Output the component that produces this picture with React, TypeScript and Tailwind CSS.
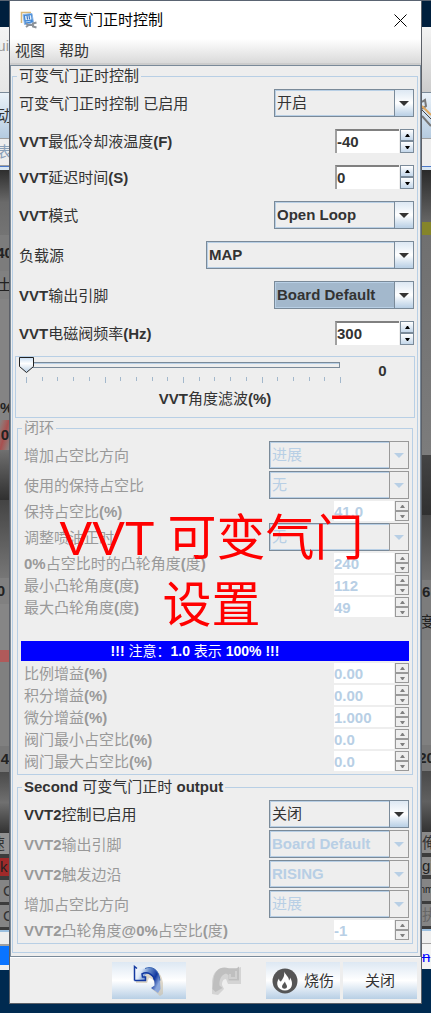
import React from 'react';

const SANS = "font-['Liberation_Sans','Noto_Sans_CJK_SC',sans-serif]";

// Latin runs are bold in this look and feel, Chinese glyphs stay regular
const Mixed: React.FC<{ text: string }> = ({ text }) => (
  <>
    {text.split(/([\x20-\x7e]+)/).map((part, i) =>
      i % 2 ? (
        <span key={i} className="font-bold">{part}</span>
      ) : (
        part
      )
    )}
  </>
);

interface RowProps {
  id: string;
  label: string;
  value: string;
  disabled?: boolean;
}

interface ComboProps extends RowProps {
  wide?: boolean;
  active?: boolean;
}

const Row: React.FC<{ id: string; label: string; disabled?: boolean; children: React.ReactNode }> = ({
  id,
  label,
  disabled,
  children,
}) => (
  <div className="flex items-center justify-between pl-[3px]">
    <label
      htmlFor={id}
      className={`whitespace-pre pt-[2px] leading-[18px] ${disabled ? 'text-[#999999]' : 'text-[#333333]'}`}
    >
      <Mixed text={label} />
    </label>
    {children}
  </div>
);

const Combo: React.FC<ComboProps> = ({ id, label, value, disabled, wide, active }) => (
  <Row id={id} label={label} disabled={disabled}>
    <div className={`relative h-7 border border-[#7a8a99] ${wide ? 'w-52' : 'w-[140px]'}`}>
      <select
        id={id}
        disabled={disabled}
        className={`block h-full w-full appearance-none border border-[#b8cfe5] pl-px pr-5 leading-5 opacity-100 outline-none
                    ${/[a-z]/i.test(value) ? 'font-bold' : 'font-normal'}
                    ${active ? 'bg-[#a3b8cc]' : 'bg-[#eeeeee]'}
                    ${disabled ? 'text-[#b8cfe5]' : 'text-[#333333]'}`}
      >
        <option>{value}</option>
      </select>
      <span
        className={`pointer-events-none absolute -inset-y-px -right-px flex w-5 items-center justify-center border
                    ${disabled
                      ? 'border-[#999999] bg-[#eeeeee] text-[#b8cfe5]'
                      : 'border-[#7a8a99] bg-linear-to-b from-[#dde8f3] via-white to-[#b8cfe5] text-[#333333]'}`}
      >
        <svg width="10" height="5" viewBox="0 0 10 5" fill="currentColor">
          <path d="M0 0h10L5 5z" />
        </svg>
      </span>
    </div>
  </Row>
);

const Stepper: React.FC<{ name: string; up?: boolean; disabled?: boolean }> = ({ name, up, disabled }) => (
  <button
    type="button"
    aria-label={name}
    disabled={disabled}
    className={`flex w-[14px] flex-1 items-center justify-center border
                ${disabled
                  ? 'border-[#999999] bg-[#eeeeee] text-[#808080]'
                  : 'border-[#7a8a99] bg-linear-to-b from-white to-[#c4d7ea] text-black'}`}
  >
    <svg width="5" height="3" viewBox="0 0 5 3" fill="currentColor">
      <path d={up ? 'M0 3h5L3 0H2z' : 'M0 0h5L3 3H2z'} />
    </svg>
  </button>
);

const Spinner: React.FC<RowProps> = ({ id, label, value, disabled }) => (
  <Row id={id} label={label} disabled={disabled}>
    <div className={`flex gap-px ${disabled ? 'h-5' : 'h-6'}`}>
      <input
        id={id}
        type="text"
        defaultValue={value}
        disabled={disabled}
        className={`bg-white font-bold outline-none
                    ${disabled
                      ? 'w-[60px] pt-px text-[#b8cfe5]'
                      : 'w-16 border-l-2 border-t-2 border-l-[#a0a0a0] border-t-[#808080] text-[#333333]'}`}
      />
      <div className="flex flex-col">
        <Stepper name={`${label} +`} up disabled={disabled} />
        <Stepper name={`${label} -`} disabled={disabled} />
      </div>
    </div>
  </Row>
);

const Group: React.FC<{ title: string; disabled?: boolean; className: string; children: React.ReactNode }> = ({
  title,
  disabled,
  className,
  children,
}) => (
  <fieldset className={`min-w-0 border border-[#b8cfe5] ${className}`}>
    <legend className={`ml-1 whitespace-pre px-[2px] leading-[14px] ${disabled ? 'text-[#999999]' : 'text-[#333333]'}`}>
      <Mixed text={title} />
    </legend>
    {children}
  </fieldset>
);

const FilterSlider: React.FC = () => (
  <div className="mx-[2px] mt-[11px] border border-[#b8cfe5] pb-2">
    <div className="flex items-start">
      <div className="relative ml-[3px] h-8 w-[324px]">
        <svg className="block" width="324" height="32" viewBox="0 0 324 32">
          <rect x="6.5" y="5.5" width="314" height="5" fill="#eeeeee" stroke="#7a8a99" />
          <path d="M7 6.5h313" stroke="#b8cfe5" />
          {Array.from({ length: 21 }, (_, i) => (
            <path
              key={i}
              d={`M${Math.round(i * 15.7) + 7.5} 20v${i % 5 === 0 ? 6 : 4}`}
              stroke="#a3b8cc"
            />
          ))}
          <path d="M.5 .5h14v9L7.5 15.5 .5 9.5z" fill="url(#thumb)" stroke="#222222" />
          <defs>
            <linearGradient id="thumb" x1="0" y1="0" x2="0" y2="1">
              <stop offset="0" stopColor="#c8ddf2" />
              <stop offset=".4" stopColor="#ffffff" />
              <stop offset="1" stopColor="#b8cfe5" />
            </linearGradient>
          </defs>
        </svg>
        <input id="filter" type="range" defaultValue={0} className="absolute inset-0 w-full opacity-0" />
      </div>
      <output htmlFor="filter" className="flex-1 pl-2 pt-1 text-center font-bold leading-5 text-[#333333]">
        0
      </output>
    </div>
    <label htmlFor="filter" className="block text-center leading-5 text-[#333333]">
      <Mixed text="VVT角度滤波(%)" />
    </label>
  </div>
);

interface Segment {
  size: string;
  text?: string;
}

// Slices of the main window that show on both sides of the dialog
const leftEdge: Segment[] = [
  { size: 'h-px bg-[#5a6472]' },
  { size: 'h-[26px] bg-[#001f3d]' },
  { size: 'h-[65px] bg-linear-to-b from-[#f4f4f4] to-[#e6e6e6] pb-7 text-[#999999] justify-end', text: 'ui' },
  { size: 'h-[46px] border-t border-[#7a8a99] bg-linear-to-b from-[#eaf2f9] to-[#b5cbe0] text-[#333333] justify-center', text: '动' },
  { size: 'h-[28px] border-y border-[#a0a0a0] bg-[#eeeeee] text-[#8aa0b8] justify-center', text: '表' },
  { size: 'h-[4px] border-t border-[#4a78c8] bg-[#d8e6f2]' },
  { size: 'h-[65px] bg-linear-to-b from-[#2e2e2e] via-[#6a6a6a] to-[#747474]' },
  { size: 'h-[36px] bg-[#7c7c7c] text-[#222222] font-bold justify-center', text: '40' },
  { size: 'h-[28px] bg-[#808080] text-[#222222] justify-center', text: '士' },
  { size: 'h-[97px] bg-[#848484]' },
  { size: 'h-[24px] bg-[#848484] text-[#222222] font-bold', text: '%' },
  { size: 'h-[30px] bg-linear-to-br from-[#848484] via-[#a85050] to-[#848484] text-[#222222] font-bold justify-end', text: '0' },
  { size: 'h-[50px] bg-linear-to-b from-[#707070] to-[#303030]' },
  { size: 'h-[78px] bg-linear-to-b from-[#444444] to-[#777777]' },
  { size: 'h-[26px] bg-[#808080] text-[#222222] font-bold justify-end pr-1', text: '0' },
  { size: 'h-[46px] bg-[#868686]' },
  { size: 'h-[12px] bg-[#b05a5a]' },
  { size: 'h-[84px] bg-[#808080]' },
  { size: 'h-[26px] bg-[#777777] text-[#222222] font-bold justify-end', text: '4' },
  { size: 'h-[61px] bg-linear-to-b from-[#4a4a4a] via-[#707070] to-[#333333]' },
  { size: 'h-[21px] bg-[#909090] text-[#333333] justify-end pr-1', text: '速' },
  { size: 'h-[26px] border-y-4 border-[#3c3c3c] bg-[#a02a2a] text-[#222222]', text: 'k' },
  { size: 'h-[22px] bg-[#858585] pl-[3px] text-[#333333]', text: 'C' },
  { size: 'h-[28px] border-y-3 border-[#3c3c3c] bg-[#858585] pl-[3px] text-[#333333]', text: 'C' },
  { size: 'h-[14px] border-t-2 border-[#9cc0e0] bg-[#eeeeee]' },
  { size: 'h-[21px] border-t-2 border-[#a0a0a0] bg-[#0a74ff]' },
  { size: 'h-[5px] bg-[#eeeeee]' },
];

const rightEdge: Segment[] = [
  { size: 'h-px bg-[#5a6472]' },
  { size: 'h-[26px] bg-[#001f3d]' },
  { size: 'h-[65px] bg-linear-to-b from-[#f4f4f4] to-[#cccccc]' },
  { size: 'h-[46px] border-t border-[#7a8a99] bg-linear-to-b from-[#eaf2f9] to-[#b5cbe0]' },
  { size: 'h-[28px] border-t border-[#a0a0a0] bg-[#eeeeee]' },
  { size: 'h-[4px] border-t border-[#4a78c8] bg-[#d8e6f2]' },
  { size: 'h-[52px] bg-linear-to-b from-[#2a2a2a] to-[#666666]' },
  { size: 'h-[13px] bg-[#85852a]' },
  { size: 'h-[220px] bg-linear-to-b from-[#707070] to-[#7c7c7c]' },
  { size: 'h-[60px] bg-linear-to-b from-[#444444] to-[#303030]' },
  { size: 'h-[65px] bg-linear-to-b from-[#484848] to-[#707070]' },
  { size: 'h-[24px] bg-[#7c7c7c] text-[#222222] font-bold', text: '6' },
  { size: 'h-[36px] bg-[#7c7c7c] text-[#222222] justify-center', text: '度' },
  { size: 'h-[105px] bg-[#808080]' },
  { size: 'h-[26px] bg-[#777777] text-[#222222] font-bold justify-center', text: '20' },
  { size: 'h-[61px] bg-linear-to-b from-[#4a4a4a] via-[#606060] to-[#333333]' },
  { size: 'h-[21px] bg-[#8a8a8a] text-[#333333]', text: '俺' },
  { size: 'h-[26px] border-y-4 border-[#3c3c3c] bg-[#8a8a8a] text-[#222222]', text: 'gi' },
  { size: 'h-[22px] bg-[#858585] text-[10px] text-[#222222] justify-center', text: 'nm' },
  { size: 'h-[28px] border-y-3 border-[#3c3c3c] bg-[#858585] text-[#666666]', text: '执' },
  { size: 'h-[14px] border-t-2 border-[#9cc0e0] bg-[#eeeeee]' },
  { size: 'h-[26px] border-t border-[#a0a0a0] bg-[#f4f4f4] text-[#0000ff] line-through', text: 'n' },
];

const Edge: React.FC<{ segments: Segment[]; children?: React.ReactNode }> = ({ segments, children }) => (
  <div aria-hidden="true" className="relative w-[9px] shrink-0 overflow-hidden">
    {segments.map((s, i) => (
      <div key={i} className={`flex items-center overflow-hidden whitespace-nowrap ${s.size}`}>
        {s.text && <span>{s.text}</span>}
      </div>
    ))}
    {children}
  </div>
);

const AppIcon: React.FC = () => (
  <svg width="18" height="18" viewBox="0 0 18 18">
    <path d="M1.500 12V1.500H11" fill="none" stroke="#d8b878" strokeWidth="1.5" />
    <path d="M3 3.500l9-1 1.500 9-9 2z" fill="#3f86d6" stroke="#8fb8e6" />
    <path d="M5 5l6-.7.6 4.200-6 .8z" fill="#e2effc" />
    <path d="M7 4.500l.5 4M9 4.300l.5 4" stroke="#2a68b8" />
    <path d="M5.500 11l5-.8" stroke="#b8d6f4" />
    <path d="M6 12.500l2.500 1.500L6 16M8.500 14h4M16.500 11.500L13 12.500v3l3.500 1" fill="none" stroke="#8c9299" strokeWidth="2" />
  </svg>
);

const UndoIcon: React.FC = () => (
  <svg width="32" height="32" viewBox="0 0 32 32">
    <path d="M3 4h15c8 1 11 7 12 14v11l-3 2-8-7 3-3c0-4-2-8-6-8l-2 5H3z" fill="#cbbfa8" opacity=".6" />
    <path
      d="M1.500 1.500L4 3.500h7.500C19 .5 26 4 27 15l.5 9-2.500 4-7-5 3.500-2.500C22 15 20 10 14.500 8.500L12 10v5.500H1.500z"
      fill="url(#undo)"
    />
    <path d="M1.500 15.500V1.500L4 3.500M1.500 15.500h11V12h-3l-.5-3c5-3 11 0 12.500 6" fill="none" stroke="#1238a0" strokeWidth="1.5" />
    <path d="M12 3.500c7-3 14 1 15 12" fill="none" stroke="#3c68b4" />
    <defs>
      <linearGradient id="undo" x1="0" y1="0" x2="1" y2=".5">
        <stop offset="0" stopColor="#ffffff" />
        <stop offset=".28" stopColor="#dce8f8" />
        <stop offset=".5" stopColor="#6c90cc" />
        <stop offset=".8" stopColor="#1238a0" />
        <stop offset="1" stopColor="#8ca8dc" />
      </linearGradient>
    </defs>
  </svg>
);

const RedoIcon: React.FC = () => (
  <svg width="32" height="32" viewBox="0 0 32 32">
    <path d="M31 2v17H18l-2-5c-3 0-4 3-4 6l2 4-6 6-6-1V16C3 8 7 3 14 3h14z" fill="#d4d4d4" />
    <path
      d="M29 1.500L26.500 3.500H19C12 .5 5 4 3.500 14L2.500 24l3 3 7-4-3-2.500C9 15 11 10 16 8.500l2.500 1.500v5.500H29z"
      fill="#bfbfbf"
    />
    <path d="M26 6v7h-6V9" fill="none" stroke="#d0d0d0" strokeWidth="2" />
  </svg>
);

const BurnIcon: React.FC = () => (
  <svg width="26" height="26" viewBox="0 0 26 26">
    <circle cx="13" cy="13" r="12.500" fill="#555555" />
    <path
      d="M12 3.500c1 3 5 5 5 9 1-1 1-2 1-3 4 6 2 13-5 13-7 0-10-7-6-12 0 2 1 3 2 3 2-3 4-6 3-10z"
      fill="#ffffff"
    />
    <path d="M13 13.500c0 2 2 3 2 5 0 3-5 3-5 0 0-2 2-3 3-5z" fill="#555555" />
  </svg>
);

const barButton = 'flex h-[37px] w-[74px] items-center justify-center';
const barFill = 'bg-linear-to-b from-[#dde8f3] via-white to-[#b8cfe5] text-[#333333]';

export default function App() {
  return (
    <div className={`flex min-h-screen bg-[#002a50] text-[15px] leading-5 ${SANS}`}>
      <Edge segments={leftEdge} />

      <main className="relative mb-[9px] flex min-w-0 flex-1 flex-col self-start border-t border-[#5a6472] bg-[#eeeeee]">
        <div className="flex flex-col border-x border-b border-[#5c6068]">
          {/* Title bar */}
          <header className="flex h-[38px] items-center bg-white pl-[10px] pr-[14px]">
            <AppIcon />
            <h1 className="ml-[5px] flex-1 text-black">可变气门正时控制</h1>
            <button type="button" aria-label="Close">
              <svg width="13" height="13" viewBox="0 0 13 13" stroke="#000000" fill="none">
                <path d="M.5 .5l12 12M12.500 .5l-12 12" />
              </svg>
            </button>
          </header>

          {/* Menu bar */}
          <nav className="flex h-[26px] gap-[14px] border-b-2 border-[#cccccc] bg-linear-to-b from-white to-[#dadada] pl-[5px] text-[#333333]">
            <button type="button">视图</button>
            <button type="button">帮助</button>
          </nav>

          <div className="border border-[#7a8a99] pb-[3px] pl-px pr-[2px] pt-[3px]">
            <Group title="可变气门正时控制" className="pb-2">
              <div className="flex flex-col gap-3 pl-[3px] pr-[3px] pt-[6px]">
                <Combo id="enabled" label="可变气门正时控制 已启用" value="开启" />
                <Spinner id="clt" label="VVT最低冷却液温度(F)" value="-40" />
                <Spinner id="delay" label="VVT延迟时间(S)" value="0" />
                <Combo id="mode" label="VVT模式" value="Open Loop" />
                <Combo id="load" label="负载源" value="MAP" wide />
                <Combo id="pin" label="VVT输出引脚" value="Board Default" active />
                <Spinner id="freq" label="VVT电磁阀频率(Hz)" value="300" />
              </div>

              <FilterSlider />

              <Group title="闭环" disabled className="mx-1 mt-[3px]">
                <div className="flex flex-col gap-[2px] px-[3px] pb-[3px] pt-[6px]">
                  <Combo id="dir" label="增加占空比方向" value="进展" disabled />
                  <Combo id="hold-use" label="使用的保持占空比" value="无" disabled />
                  <Spinner id="hold" label="保持占空比(%)" value="41.0" disabled />
                  <Combo id="inj" label="调整喷油正时" value="无" disabled />
                  <Spinner id="cam0" label="0%占空比时的凸轮角度(度)" value="240" disabled />
                  <Spinner id="cam-min" label="最小凸轮角度(度)" value="112" disabled />
                  <Spinner id="cam-max" label="最大凸轮角度(度)" value="49" disabled />
                  <p className="mt-[22px] h-5 bg-[#0000ff] pr-10 text-center text-sm leading-5 text-white">
                    <Mixed text="!!! 注意：1.0 表示 100% !!!" />
                  </p>
                  <Spinner id="kp" label="比例增益(%)" value="0.00" disabled />
                  <Spinner id="ki" label="积分增益(%)" value="0.00" disabled />
                  <Spinner id="kd" label="微分增益(%)" value="1.000" disabled />
                  <Spinner id="duty-min" label="阀门最小占空比(%)" value="0.0" disabled />
                  <Spinner id="duty-max" label="阀门最大占空比(%)" value="0.0" disabled />
                </div>
              </Group>

              <Group title="Second 可变气门正时 output" className="mx-1 mt-[5px]">
                <div className="flex flex-col gap-[2px] px-[3px] pb-[3px] pt-[6px]">
                  <Combo id="vvt2" label="VVT2控制已启用" value="关闭" />
                  <Combo id="vvt2-pin" label="VVT2输出引脚" value="Board Default" disabled />
                  <Combo id="vvt2-edge" label="VVT2触发边沿" value="RISING" disabled />
                  <Combo id="vvt2-dir" label="增加占空比方向" value="进展" disabled />
                  <Spinner id="vvt2-cam" label="VVT2凸轮角度@0%占空比(度)" value="-1" disabled />
                </div>
              </Group>
            </Group>
          </div>

          {/* Action buttons */}
          <footer className="flex justify-end gap-[3px] border-t border-white pb-1 pr-1 pt-1">
            <button type="button" aria-label="Undo" className={`${barButton} ${barFill}`}>
              <UndoIcon />
            </button>
            <button type="button" aria-label="Redo" disabled className={barButton}>
              <RedoIcon />
            </button>
            <button type="button" className={`${barButton} ${barFill} gap-[6px]`}>
              <BurnIcon />
              <span>烧伤</span>
            </button>
            <button type="button" className={`${barButton} ${barFill}`}>关闭</button>
          </footer>
        </div>

        {/* Caption over the dialog */}
        <p className="pointer-events-none absolute inset-x-0 top-[504px] whitespace-pre pr-2 text-center text-[49px] leading-[67px] text-[#ff0000]">
          VVT 可变气门{'\n'}设置
        </p>
      </main>

      <Edge segments={rightEdge}>
        <svg className="absolute left-0 top-[98px]" width="9" height="32" viewBox="0 0 9 32" fill="none">
          <path d="M0 4l3-2 1 6-4 3M0 18l9 10" stroke="#777777" strokeWidth="2" />
          <path d="M0 8l9 9" stroke="#e0a860" strokeWidth="2" />
          <path d="M0 12l9 9" stroke="#444444" />
        </svg>
      </Edge>
    </div>
  );
}
